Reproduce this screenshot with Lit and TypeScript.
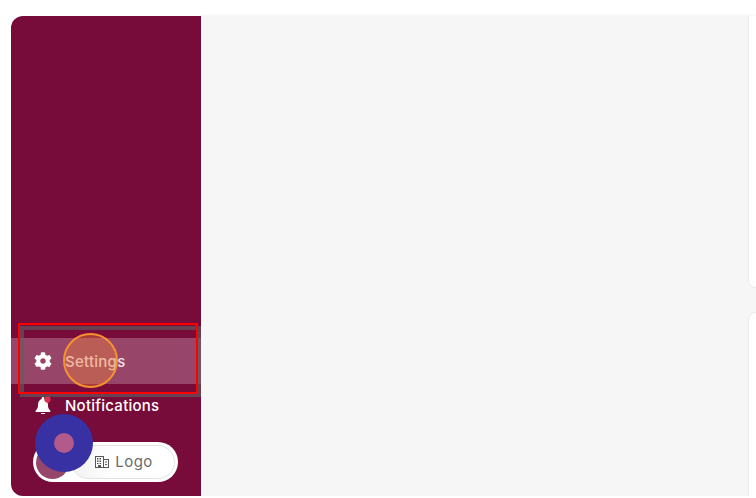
import { LitElement, html, css } from 'lit';
import { customElement } from 'lit/decorators.js';

@customElement('app-root')
export class AppRoot extends LitElement {
  static styles = css`
    :host {
      display: block;
      width: 756px;
      height: 498px;
      overflow: hidden;
      background: #fff;
      font-family: 'Inter', 'Liberation Sans', sans-serif;
    }

    .shell {
      position: relative;
      display: flex;
      height: 480px;
      margin-top: 16px;
      padding-left: 11px;
    }

    .sidebar {
      flex: 0 0 190px;
      display: flex;
      flex-direction: column;
      justify-content: flex-end;
      padding-bottom: 14px;
      background: #770b39;
      border-radius: 12px 0 0 12px;
      box-sizing: border-box;
      color: #fff;
    }

    .nav {
      display: flex;
      align-items: center;
      gap: 13px;
      padding-left: 23px;
      font-size: 15px;
      font-weight: 500;
      letter-spacing: 0.25px;
    }

    .nav svg {
      width: 18px;
      height: 18px;
      flex: none;
      fill: #fff;
    }

    .nav.active {
      height: 46px;
      background: rgba(255, 255, 255, 0.24);
      color: rgba(255, 255, 255, 0.85);
    }

    .nav.plain {
      height: 42px;
    }

    .toggle {
      display: flex;
      align-items: center;
      align-self: flex-start;
      box-sizing: border-box;
      width: 145px;
      height: 40px;
      margin: 16px 0 0 22px;
      padding: 3px;
      background: #fff;
      border-radius: 20px;
    }

    .dot {
      flex: none;
      width: 33px;
      height: 33px;
      margin-right: 5px;
      border-radius: 50%;
      background: #96466a;
    }

    .logo {
      flex: 1;
      display: flex;
      align-items: center;
      justify-content: center;
      gap: 6px;
      box-sizing: border-box;
      height: 34px;
      margin-left: -3px;
      padding: 0 0 2px 2px;
      border: 1px solid #e2e2e2;
      border-radius: 17px;
      background: linear-gradient(90deg, #f1f1f1, #fff 40%);
      color: #6b6b6b;
      font-size: 15px;
      letter-spacing: 0.4px;
    }

    .logo svg {
      width: 14px;
      height: 12px;
      margin-top: 2px;
    }

    .main {
      flex: 1;
      display: flex;
      flex-direction: column;
      gap: 24px;
      align-items: flex-end;
      background: #f6f6f6;
      box-shadow: 0 -1px 2px rgba(0, 0, 0, 0.05);
    }

    .card {
      flex: none;
      box-sizing: border-box;
      width: 8px;
      background: #fff;
      border: 1px solid #ececec;
      border-right: none;
      border-radius: 8px 0 0 8px;
    }

    .card.top {
      height: 272px;
      border-top: none;
      border-top-left-radius: 0;
    }

    .card.bottom {
      flex: 1;
      border-bottom: none;
      border-bottom-left-radius: 0;
    }

    .focus-shadow {
      position: absolute;
      left: 20px;
      top: 310px;
      width: 181px;
      height: 71px;
      box-sizing: border-box;
      border: 4px solid rgba(95, 95, 95, 0.65);
      filter: blur(0.6px);
    }

    .focus {
      position: absolute;
      left: 18px;
      top: 307px;
      width: 180px;
      height: 71px;
      box-sizing: border-box;
      border: 2px solid #ff0000;
    }

    .ripple {
      position: absolute;
      left: 63px;
      top: 317px;
      width: 55px;
      height: 55px;
      box-sizing: border-box;
      border: 2px solid #f7902f;
      border-radius: 50%;
      background: rgba(240, 130, 60, 0.4);
    }

    .cursor {
      position: absolute;
      left: 35px;
      top: 398px;
      width: 58px;
      height: 58px;
      display: flex;
      align-items: center;
      justify-content: center;
      border-radius: 50%;
      background: #3731a3;
    }

    .cursor span {
      width: 20px;
      height: 20px;
      border-radius: 50%;
      background: #b35a8c;
    }
  `;

  render() {
    return html`
      <div class="shell">
        <aside class="sidebar">
          <div class="nav active">
            <svg viewBox="0 0 512 512">
              <path
                d="M487.4 315.7l-42.6-24.6c4.3-23.2 4.3-47 0-70.2l42.6-24.6c4.9-2.8 7.1-8.6 5.5-14-11.1-35.6-30-67.8-54.7-94.6-3.8-4.1-10-5.1-14.8-2.3L380.8 110c-17.9-15.4-38.5-27.3-60.8-35.1V25.8c0-5.6-3.9-10.5-9.4-11.7-36.7-8.2-74.3-7.8-109.2 0-5.5 1.2-9.4 6.1-9.4 11.7V75c-22.2 7.9-42.8 19.8-60.8 35.1L88.7 85.5c-4.9-2.8-11-1.9-14.8 2.3-24.7 26.7-43.6 58.9-54.7 94.6-1.7 5.4.6 11.2 5.5 14L67.3 221c-4.3 23.2-4.3 47 0 70.2l-42.6 24.6c-4.9 2.8-7.1 8.6-5.5 14 11.1 35.6 30 67.8 54.7 94.6 3.8 4.1 10 5.1 14.8 2.3l42.6-24.6c17.9 15.4 38.5 27.3 60.8 35.1v49.2c0 5.6 3.9 10.5 9.4 11.7 36.7 8.2 74.3 7.8 109.2 0 5.5-1.2 9.4-6.1 9.4-11.7v-49.2c22.2-7.9 42.8-19.8 60.8-35.1l42.6 24.6c4.9 2.8 11 1.9 14.8-2.3 24.7-26.7 43.6-58.9 54.7-94.6 1.5-5.5-.7-11.3-5.6-14.1zM256 336c-44.1 0-80-35.9-80-80s35.9-80 80-80 80 35.9 80 80-35.9 80-80 80z"
              />
            </svg>
            Settings
          </div>
          <div class="nav plain">
            <svg viewBox="2 1 20 20">
              <path d="M12 22a2.6 2.6 0 0 0 2.5-2h-5A2.6 2.6 0 0 0 12 22z" />
              <path
                d="M20 17c-1-1-2.5-2-2.5-6.5C17.5 7.5 15.2 5 13.5 4.4V3.5a1.5 1.5 0 0 0-3 0v.9C8.3 5 6.5 7.5 6.5 10.5 6.5 15 5 16 4 17c-.6.6-.2 1.8.8 1.8h14.4c1 0 1.4-1.2.8-1.8z"
              />
              <circle cx="17" cy="5" r="3.5" fill="#d9304f" />
            </svg>
            Notifications
          </div>
          <div class="toggle">
            <span class="dot"></span>
            <div class="logo">
              <svg viewBox="0 0 14 12" fill="#555">
                <path
                  d="M0 0h9v3h5v9H0zM1 1v10h2V9h3v2h2V1zM9 4v7h4V4zM2 2h1.5v1.5H2zM4.5 2H6v1.5H4.5zM2 4.5h1.5V6H2zM4.5 4.5H6V6H4.5zM2 7h1.5v1H2zM4.5 7H6v1H4.5zM10 5.5h2v1h-2zM10 8h2v1h-2z"
                />
              </svg>
              Logo
            </div>
          </div>
        </aside>
        <main class="main">
          <div class="card top"></div>
          <div class="card bottom"></div>
        </main>
        <div class="focus-shadow"></div>
        <div class="focus"></div>
        <div class="ripple"></div>
        <div class="cursor"><span></span></div>
      </div>
    `;
  }
}
